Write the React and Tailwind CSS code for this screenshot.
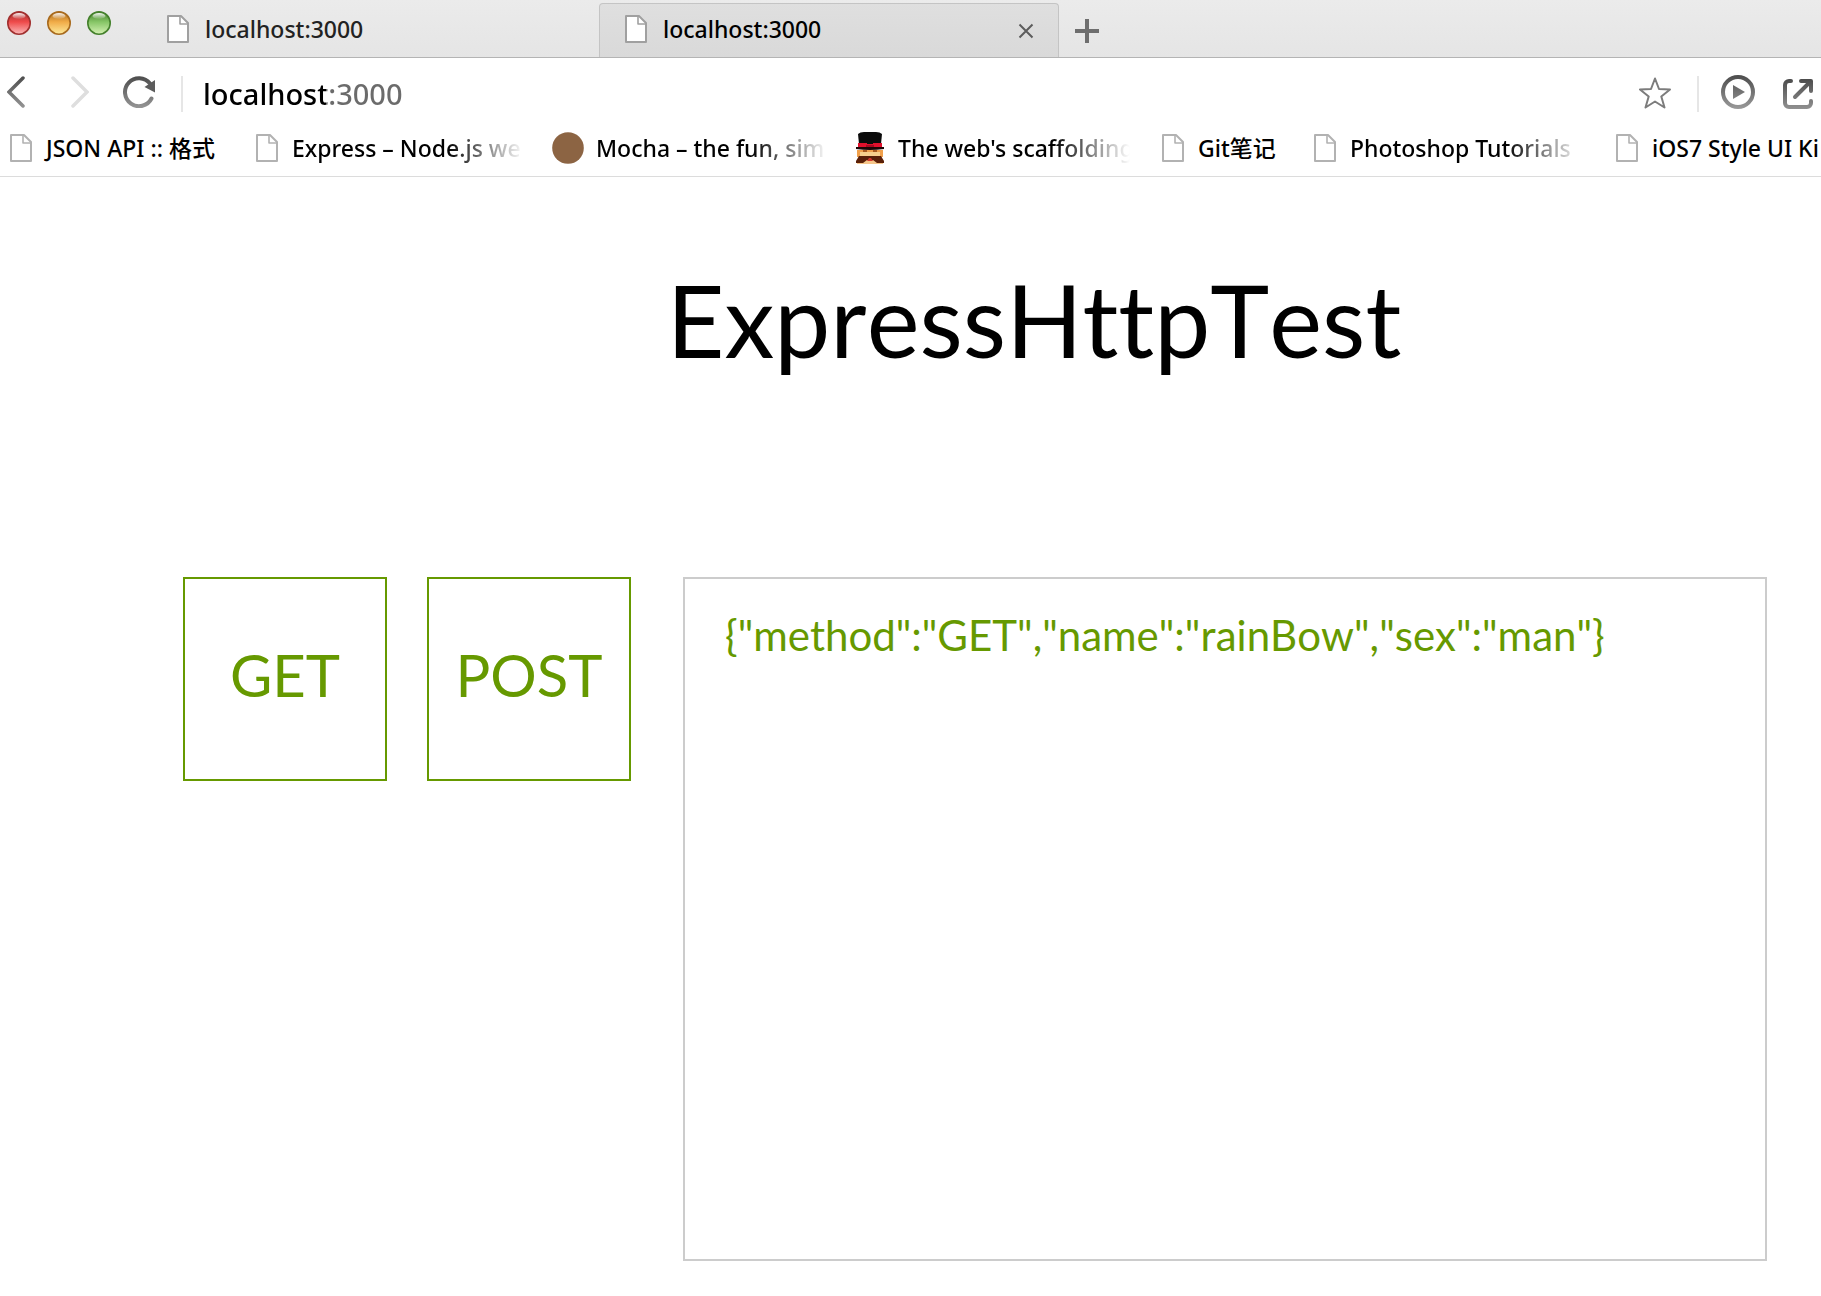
import React, { useState } from 'react';

function FileIcon({ className = 'fill-white stroke-[#a0a0a0]' }) {
  return (
    <svg viewBox="0 0 22 28" className={`h-7 w-[22px] shrink-0 ${className}`} strokeWidth="2" strokeLinejoin="round" aria-hidden="true">
      <path d="M1 1h13l7 7v19H1z" />
      <path d="M13 1v8h8" fill="none" strokeWidth="1.6" />
    </svg>
  );
}

function MochaIcon() {
  return (
    <svg viewBox="0 0 32 32" className="size-8 shrink-0" aria-hidden="true">
      <circle cx="16" cy="16" r="15.8" fill="#8c6443" />
    </svg>
  );
}

function YeomanIcon() {
  return (
    <svg viewBox="0 0 28 32" className="h-8 w-7 shrink-0" aria-hidden="true">
      <path d="M1 18h26v7H1z" fill="#f0a04b" />
      <path d="M4 20h20v4H4z" fill="#f8cf8c" />
      <path d="M7 18h4v2H7zM17 18h4v2h-4z" fill="#a85a20" />
      <path d="M2 2q2-2 6-2h12q4 0 6 2l-1 10H3z" fill="#0b0b0b" />
      <path d="M2 11h9v1h6v-1h9v4H2z" fill="#e0102c" />
      <path d="M10 13h8v2h-8z" fill="#a80820" />
      <path d="M0 15h28v2q-14 2-28 0z" fill="#1c0606" />
      <path d="M1 28h26v4H1z" fill="#f6c68a" />
      <path d="M3 24h22l3 5v2h-7l-4-3h-6l-4 3H0v-2z" fill="#5a2008" />
      <path d="M13 26h2l2 3h-6z" fill="#d0342a" />
    </svg>
  );
}

function TrafficLight({ id, label, edge, mid, low }) {
  return (
    <button type="button" aria-label={label} className="size-6">
      <svg viewBox="0 0 24 24" className="size-6" aria-hidden="true">
        <defs>
          <linearGradient id={id} x1="0" y1="0" x2="0" y2="1">
            <stop offset="0" stopColor={edge} />
            <stop offset="0.45" stopColor={mid} />
            <stop offset="1" stopColor={low} />
          </linearGradient>
          <linearGradient id={`${id}-shine`} x1="0" y1="0" x2="0" y2="1">
            <stop offset="0" stopColor="#fff" stopOpacity="0.95" />
            <stop offset="1" stopColor="#fff" stopOpacity="0.05" />
          </linearGradient>
        </defs>
        <circle cx="12" cy="12" r="11.2" fill={`url(#${id})`} stroke={edge} strokeWidth="1.6" />
        <ellipse cx="12" cy="5" rx="6.5" ry="3" fill={`url(#${id}-shine)`} />
      </svg>
    </button>
  );
}

const fade = '[mask-image:linear-gradient(to_right,#000_155px,transparent_232px)]';

const bookmarks = [
  { text: 'JSON API :: 格式', width: 'w-[246px]', gap: 'gap-[14px]' },
  { text: 'Express – Node.js we', width: 'w-[296px]', gap: 'gap-[14px]', fade: true },
  { text: 'Mocha – the fun, sim', width: 'w-[304px]', gap: 'gap-3', icon: MochaIcon, fade: true },
  { text: "The web's scaffolding", width: 'w-[306px]', gap: 'gap-[14px]', icon: YeomanIcon, fade: true },
  { text: 'Git笔记', width: 'w-[152px]', gap: 'gap-[14px]' },
  { text: 'Photoshop Tutorials', width: 'w-[302px]', gap: 'gap-[14px]', fade: true },
  { text: 'iOS7 Style UI Ki', width: 'w-[302px]', gap: 'gap-[14px]' },
];

function TabBar() {
  return (
    <header className="flex h-[58px] border-b border-[#b4b4b4] bg-linear-to-b from-[#ebebeb] to-[#e5e5e5]">
      <div className="flex w-[141px] shrink-0 gap-4 pt-[11px] pl-[7px]">
        <TrafficLight id="close" label="Close window" edge="#a1302f" mid="#ef4a4a" low="#fbb9b9" />
        <TrafficLight id="minimise" label="Minimise window" edge="#a86a1e" mid="#f1ab47" low="#fdeb9c" />
        <TrafficLight id="zoom" label="Zoom window" edge="#44802c" mid="#86c566" low="#d5f2b4" />
      </div>
      <nav className="flex items-stretch font-medium" aria-label="Tabs">
        <button type="button" className="flex w-[458px] items-center gap-4 pl-[26px] text-[#222]">
          <FileIcon />
          <span>localhost:3000</span>
        </button>
        <div className="mt-[3px] flex w-[460px] items-center rounded-t border border-b-0 border-[#c4c4c4] bg-linear-to-b from-[#dfdfdf] to-[#d9d9d9] pr-6 pb-[3px] pl-[25px]">
          <button type="button" className="flex flex-1 items-center gap-4">
            <FileIcon />
            <span>localhost:3000</span>
          </button>
          <button type="button" aria-label="Close tab" className="mt-1">
            <svg viewBox="0 0 16 16" className="size-4 stroke-[#5c5c5c]" strokeWidth="2" aria-hidden="true">
              <path d="M1.500 1.500l13 13M14.500 1.500l-13 13" />
            </svg>
          </button>
        </div>
        <button type="button" aria-label="New tab" className="ml-4 pt-1">
          <svg viewBox="0 0 24 24" className="size-6 stroke-[#6e6e6e]" strokeWidth="4" aria-hidden="true">
            <path d="M12 0v24M0 12h24" />
          </svg>
        </button>
      </nav>
    </header>
  );
}

function Toolbar() {
  const [url, setUrl] = useState('localhost:3000');
  return (
    <div className="flex h-[70px] items-center pr-2 pb-[2px] pl-[7px]">
      <svg className="absolute size-0" aria-hidden="true">
        <defs>
          <linearGradient id="ink" gradientUnits="userSpaceOnUse" x1="0" y1="0" x2="0" y2="34">
            <stop offset="0" stopColor="#4c4c4c" />
            <stop offset="1" stopColor="#9a9a9a" />
          </linearGradient>
        </defs>
      </svg>
      <button type="button" aria-label="Back" className="w-16">
        <svg viewBox="0 0 18 32" className="h-8 w-[18px]" fill="none" stroke="url(#ink)" strokeWidth="3.500" strokeLinecap="round" aria-hidden="true">
          <path d="M16 2L2 16l14 14" />
        </svg>
      </button>
      <button type="button" aria-label="Forward" className="w-[52px]">
        <svg viewBox="0 0 18 32" className="h-8 w-[18px]" fill="none" stroke="#dedede" strokeWidth="3.500" strokeLinecap="round" aria-hidden="true">
          <path d="M2 2l14 14L2 30" />
        </svg>
      </button>
      <button type="button" aria-label="Reload">
        <svg viewBox="0 0 32 32" className="size-8" fill="none" stroke="url(#ink)" aria-hidden="true">
          <path d="M28.500 22.500A14 14 0 1 1 27 7.500" strokeWidth="4" strokeLinecap="round" />
          <path d="M32 4v12.500L21.500 11z" fill="#5c5c5c" stroke="none" />
        </svg>
      </button>
      <span className="mt-1 ml-[26px] h-9 w-[2px] bg-[#e6e6e6]" />
      <input
        aria-label="Address"
        value={url}
        onChange={(e) => setUrl(e.target.value)}
        className="ml-5 min-w-0 flex-1 bg-[linear-gradient(90deg,#000_123px,#6b6b6b_123px)] bg-clip-text pt-1 text-[29px] leading-10 font-medium text-transparent caret-black outline-none"
      />
      <button type="button" aria-label="Bookmark this page" className="mt-[2px]">
        <svg viewBox="0 0 32 32" className="size-8" fill="none" stroke="#7c7c7c" strokeWidth="2" strokeLinejoin="round" aria-hidden="true">
          <path d="M16 1.500l4 10.500 11 .5-8.700 7 3.200 11L16 24.500 6.500 30.500l3.200-11L1 12.500 12 12z" />
        </svg>
      </button>
      <span className="mt-1 ml-[26px] h-9 w-[2px] bg-[#e6e6e6]" />
      <button type="button" aria-label="Play" className="ml-[22px]">
        <svg viewBox="0 0 34 34" className="size-[34px]" aria-hidden="true">
          <circle cx="17" cy="17" r="15" fill="none" stroke="url(#ink)" strokeWidth="4" />
          <path d="M12 10l12 7-12 7z" fill="url(#ink)" />
        </svg>
      </button>
      <button type="button" aria-label="Share" className="mt-1 ml-7">
        <svg viewBox="0 0 30 30" className="size-[30px]" fill="none" stroke="url(#ink)" strokeWidth="4" strokeLinecap="round" strokeLinejoin="round" aria-hidden="true">
          <path d="M8 2H6a4 4 0 0 0-4 4v18a4 4 0 0 0 4 4h18a4 4 0 0 0 4-4v-2" />
          <path d="M18 2h10v10M12 18L27 3" />
        </svg>
      </button>
    </div>
  );
}

function BookmarkBar() {
  return (
    <nav aria-label="Bookmarks" className="flex h-[49px] overflow-hidden border-b border-[#dcdcdc] pl-[10px] font-medium">
      {bookmarks.map((b) => {
        const Icon = b.icon;
        return (
          <a key={b.text} href="#" className={`flex h-10 shrink-0 items-center whitespace-nowrap ${b.width} ${b.gap}`}>
            {Icon ? <Icon /> : <FileIcon className="fill-white stroke-[#b2b2b2]" />}
            <span className={b.fade ? fade : ''}>{b.text}</span>
          </a>
        );
      })}
    </nav>
  );
}

function MethodButton({ children, onClick }) {
  return (
    <button type="button" onClick={onClick} className="size-[204px] shrink-0 border-2 border-[#690] pb-2 text-[58px]">
      {children}
    </button>
  );
}

export default function App() {
  const [method, setMethod] = useState('GET');
  return (
    <div className="min-h-screen overflow-hidden bg-white font-['Noto_Sans','Noto_Sans_CJK_SC',sans-serif] text-[23px] leading-8 text-black">
      <TabBar />
      <Toolbar />
      <BookmarkBar />
      <main className="font-['Lato',sans-serif] text-[#690] [font-kerning:none] [font-variant-ligatures:none]">
        <h1 className="pt-[82px] pl-[247px] text-center text-[100px] leading-[120px] text-black">ExpressHttpTest</h1>
        <div className="flex pt-[198px] pr-[54px] pb-9 pl-[183px]">
          <div className="flex gap-10">
            <MethodButton onClick={() => setMethod('GET')}>GET</MethodButton>
            <MethodButton onClick={() => setMethod('POST')}>POST</MethodButton>
          </div>
          <output className="ml-[52px] min-h-[684px] min-w-0 flex-1 border-2 border-[#ccc] px-10 py-[30px] text-[42px] leading-[52px]">
            {JSON.stringify({ method, name: 'rainBow', sex: 'man' })}
          </output>
        </div>
      </main>
    </div>
  );
}
